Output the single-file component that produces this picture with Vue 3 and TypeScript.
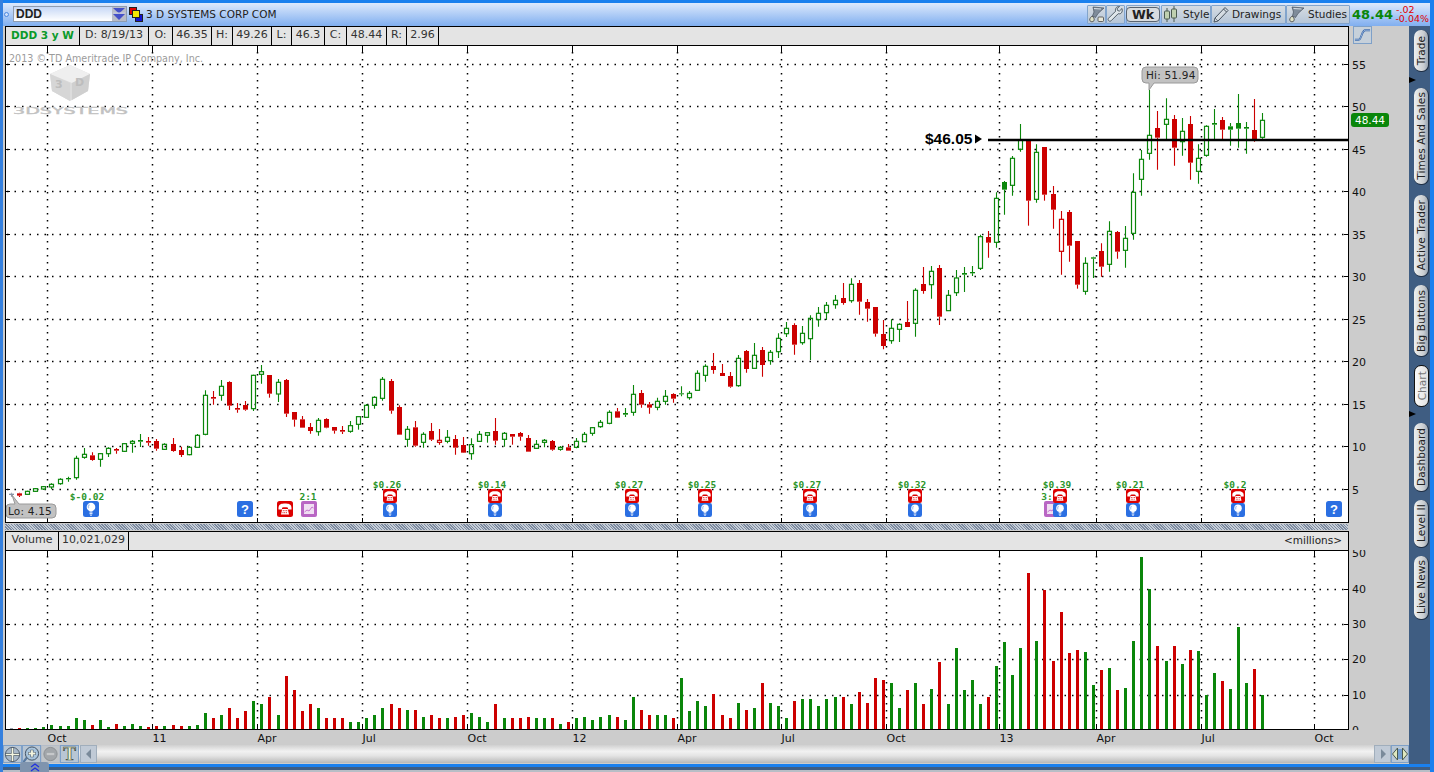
<script setup lang="ts">
type Candle = { x: number; kind: string; wt: number; bt: number; bb: number; wb: number; color: string; hollow: boolean };

function section(base: number, rows: string): number[][] {
  return rows.trim().split(/\s*;\s*/).filter(Boolean).map((r) => {
    const p = r.trim().split(/\s+/);
    return [p[0].charCodeAt(0), base + +p[1] / 3, base + +p[2] / 3, base + +p[3] / 3, base + +p[4] / 3];
  });
}

const raw: number[][] = [
  ...section(360, `g 398 401 405 410; r 398 400 407 411; h 392 394 403 404; h 384 386 394 395; h 378 380 387 390; h 370 373 381 388;
  h 355 358 371 374; f 350 354 358 365; h 287 295 353 359; h 264 283 292 296; r 277 286 300 302; h 279 281 298 320;
  h 262 265 281 291; r 264 267 272 281; h 249 251 274 276; h 240 244 250 278; f 222 240 245 261; r 231 243 248 257;
  r 237 243 266 272; h 250 253 268 270; r 234 252 273 275; r 260 270 285 291; h 258 262 284 286; h 222 226 262 264;
  h 91 106 223 226; r 93 111 116 134; h 60 79 106 122; r 64 66 137 150; r 129 144 149 158; r 123 135 149 152;
  h 44 46 146 153; h 15 35 43 71; r 45 45 101 113; h 57 67 102 126; r 57 60 161 171; r 156 156 179 200; r 168 178 203 203;
  r 189 201 213 221; h 174 181 215 227; r 175 177 203 205; r 201 201 212 221; r 198 210 215 222;
  h 183 197 214 218; h 170 170 193 209; h 132 136 172 172; h 109 112 136 146; h 51 58 115 122; r 57 63 152 161; r 136 141 224 224;
  h 198 208 238 260; r 183 202 257 260; h 217 223 247 263; r 189 213 239 243; R 207 241 247 254; h 210 232 244 250;
  r 225 237 263 284; r 231 255 278 279; h 235 254 281 299; h 213 223 244 246; h 218 218 226 248; r 174 213 242 254;
  h 216 220 238 260; r 222 222 230 254; r 216 219 230 242; r 225 234 275 275; h 240 253 265 266; h 237 241 247 262;
  r 240 243 269 272; h 258 262 268 272; r 252 262 272 272; h 234 244 262 265; h 216 223 245 247; h 202 203 220 227;
  h 180 187 200 203; h 151 157 190 193; r 144 154 173 173; f 144 159 164 171; h 75 103 157 167; r 90 99 134 143;
  r 126 133 143 161; h 113 124 142 151; h 90 109 124 134; r 100 102 116 128;`),
  ...section(270, `f 349 370 373 379; h 363 370 383 389; h 301 310 361 361; h 283 289 316 335; r 249 288 300 311; r 282 309 318 318;
  r 306 318 350 353; h 255 265 347 350; r 240 243 297 308; h 219 256 295 295; r 231 240 285 320; h 240 247 272 284;
  h 190 205 245 264; h 156 175 191 201; r 160 165 224 254; h 168 190 218 224; h 136 145 206 270; h 111 130 149 170;
  h 96 106 128 150; h 75 91 104 116; r 39 84 99 104; h 25 43 92 98; r 30 39 95 134; r 87 96 116 155; r 111 111 191 200;
  r 150 192 228 238; h 148 175 212 221; h 160 163 178 216; r 93 156 171 171; h 55 61 160 200; r -9 42 63 71;
  h -12 4 44 86; r -15 -6 140 165; h 60 76 122 122; h 0 24 68 78; f -9 9 14 66; f -12 6 10 18;`),
  ...section(90, `h 434 440 535 540; r 423 441 458 503; h 307 325 457 473; f 273 276 299 374; h 198 205 286 317; h 102 150 178 185;
  r 150 150 332 407; h 163 187 328 338; r 171 171 314 332; r 288 312 359 416; R 363 388 484 554; r 360 366 467 515;
  r 453 453 584 596; h 502 520 604 614; f 500 502 506 564; r 460 483 530 560; h 394 424 523 545; r 423 426 485 506;
  h 408 445 481 533; h 250 307 430 449; h 180 208 268 317; h 0 136 190 209; r 63 114 143 239; h 25 88 103 150;
  r 75 87 173 227; h 84 124 155 197; r 78 102 218 269; h 163 205 244 281; h 106 109 196 200; f 57 99 104 150;
  r 81 90 119 150; f 99 109 119 167; f 12 99 116 173; f 96 111 116 191; r 27 120 148 155; h 69 91 142 146;`),
];

const candleColor: Record<string, string> = { g: '#8794a6', r: '#cc0000', R: '#cc0000', h: '#0a860a', f: '#0a860a' };

const candles: Candle[] = raw.map((r, i) => {
  const kind = String.fromCharCode(r[0]);
  return {
    x: Math.floor(11.6 + 8.073 * i) + 0.5,
    kind,
    wt: r[1],
    bt: r[2],
    bb: r[3],
    wb: r[4],
    color: candleColor[kind],
    hollow: kind === 'h' || kind === 'R',
  };
});

const heights = [
  1, 1.5, 1, 1, 2, 4, 3, 3, 11, 9, 4, 9, 2, 5, 3, 5, 3, 2, 3, 3, 4, 3, 3, 4,
  16, 11, 14, 21, 11, 18, 28, 25, 32, 14, 53, 39, 18, 25, 21, 11, 11, 11, 7, 7, 11, 14, 21, 25, 21, 19, 19, 12, 14, 11, 11,
  12, 14, 16, 12, 7, 25, 11, 11, 11, 12, 11, 11, 11, 5, 7, 11, 12, 9, 12, 14, 12, 9, 32, 19, 14, 14, 14, 11, 51, 18, 28, 23,
  35, 14, 11, 26, 19, 21, 46, 26, 23, 11, 28, 30, 30, 23, 30, 32, 32, 25, 37, 26, 51, 49, 46, 21, 39, 46, 25, 40, 67, 25, 81,
  39, 49, 25, 32, 63,
  87, 54, 81, 156, 88, 139, 68, 117, 76, 79, 77, 44, 59, 61, 39, 41, 88, 172, 140, 83, 68, 83, 65, 79, 78, 34, 56, 48, 40, 102, 46, 60, 34,
];

const bars = candles.map((c, i) => ({
  x: c.x - 1.5,
  y: 729 - heights[i],
  h: heights[i],
  color: c.color === '#cc0000' ? '#cc0000' : c.kind === 'g' ? '#9aa3ae' : '#0a860a',
}));

const gridX = [47.5, 152.5, 257.5, 362.5, 467.5, 572.5, 677.5, 781.5, 886.5, 999.5, 1096.5, 1201.5, 1314.5];
const gridY = [64.5, 106.5, 149.5, 191.5, 234.5, 276.5, 319.5, 361.5, 404.5, 446.5, 489.5];
const volY = [589.5, 624.5, 659.5, 695.5];
const priceLabels = [55, 50, 45, 40, 35, 30, 25, 20, 15, 10, 5];
const volLabels: [string, number][] = [['50', 553], ['40', 589], ['30', 624], ['20', 659], ['10', 695], ['0', 730]];
const xLabels = ['Oct', '11', 'Apr', 'Jul', 'Oct', '12', 'Apr', 'Jul', 'Oct', '13', 'Apr', 'Jul', 'Oct'];

const earnings = [
  { x: 390, label: '$0.26' }, { x: 495, label: '$0.14' }, { x: 632, label: '$0.27' },
  { x: 705, label: '$0.25' }, { x: 810, label: '$0.27' }, { x: 915, label: '$0.32' },
  { x: 1060, label: '$0.39' }, { x: 1133, label: '$0.21' }, { x: 1238, label: '$0.2' },
];

const cells = [
  { t: 'DDD 3 y W', w: 74, cls: 'sym' }, { t: 'D: 8/19/13', w: 69, cls: '' }, { t: 'O:', w: 24, cls: '' }, { t: '46.35', w: 39, cls: '' },
  { t: 'H:', w: 21, cls: '' }, { t: '49.26', w: 39, cls: '' }, { t: 'L:', w: 20, cls: '' }, { t: '46.3', w: 33, cls: '' },
  { t: 'C:', w: 22, cls: '' }, { t: '48.44', w: 40, cls: '' }, { t: 'R:', w: 20, cls: '' }, { t: '2.96', w: 32, cls: '' },
];

const tabs = [
  { t: 'Trade', h: 42, top: 4, active: false },
  { t: 'Times And Sales', h: 97, top: 16, active: false },
  { t: 'Active Trader', h: 82, top: 10, active: false },
  { t: 'Big Buttons', h: 72, top: 8, active: false },
  { t: 'Chart', h: 42, top: 8, active: true },
  { t: 'Dashboard', h: 69, top: 16, active: false },
  { t: 'Level II', h: 48, top: 8, active: false },
  { t: 'Live News', h: 64, top: 8, active: false },
];
</script>

<template>
  <div class="app">
    <header class="top">
      <span class="dot"></span>
      <div class="symbol">
        <span class="symbol-text">DDD</span>
        <span class="drop">
          <svg width="14" height="14" viewBox="0 0 14 14">
            <path d="M1 1h12L7 6.500z" fill="#4450c8" />
            <path d="M1 7h12L7 13z" fill="#4450c8" />
            <path d="M1 6h12" stroke="#c8cce8" />
          </svg>
        </span>
      </div>
      <svg class="link" width="14" height="15" viewBox="0 0 14 15">
        <rect x="0.500" y="0.500" width="7" height="7" fill="#e00000" stroke="#222" />
        <rect x="6.500" y="7.500" width="7" height="7" fill="#1414d0" stroke="#222" />
        <rect x="3.500" y="3.500" width="7" height="7" fill="#f4e800" stroke="#222" />
      </svg>
      <span class="company">3 D SYSTEMS CORP COM</span>
      <div class="spacer"></div>
      <div class="tools">
        <button class="tool sq">
          <svg width="17" height="17" viewBox="0 0 17 17">
            <path d="M5 1l11 1-6 5.500-2.500 4-3-1.500L6 6z" fill="#7f8c9a" stroke="#48525e" stroke-width=".7" />
            <path d="M6 2.500l7 .5" stroke="#d8dee4" />
            <path d="M4 10c1.500 1.500 2.500 2.500 2.200 4a2.300 2.300 0 0 1-4.500 0C1.500 12.500 3 11 4 10z" fill="#dfe3c8" stroke="#444" stroke-width=".8" />
            <rect x="10" y="11" width="5.500" height="4.500" rx="1" fill="#e8e8d8" stroke="#444" stroke-width=".8" />
          </svg>
        </button>
        <button class="tool sq">
          <svg width="17" height="17" viewBox="0 0 17 17">
            <path d="M15 2.500l-2.600 2.600-1.800-.6-.6-1.800L12.600 0.400C9.800 0 7.800 2.500 8.600 5.200L1.600 12.200c-1.500 1.700.8 4 2.600 2.500l7-7c2.700.8 4.800-1.500 3.800-5.200z" fill="#dfe6ea" stroke="#46525e" stroke-width=".9" />
          </svg>
        </button>
        <button class="tool wk"><span class="wk-pill">Wk</span></button>
        <button class="tool style">
          <svg width="16" height="17" viewBox="0 0 16 17">
            <path d="M4 2v14M11 0v16" stroke="#4a5a50" />
            <rect x="1.500" y="5" width="5" height="8" rx="1" fill="#bfd0b0" stroke="#4a5a50" />
            <rect x="8.500" y="3" width="5" height="9" rx="1" fill="#bfd0b0" stroke="#4a5a50" />
          </svg>
          <span>Style</span>
        </button>
        <button class="tool draw">
          <svg width="16" height="17" viewBox="0 0 16 17">
            <path d="M12 1.500l3 3L5 15l-4 1 1-4z" fill="#d5dce2" stroke="#46525e" />
            <path d="M10.500 3l3 3" stroke="#46525e" />
            <path d="M2 12l3 3" stroke="#46525e" stroke-width=".7" />
          </svg>
          <span>Drawings</span>
        </button>
        <button class="tool studies">
          <svg width="17" height="17" viewBox="0 0 17 17">
            <path d="M4 1l12 1-6 5.500-2.500 4-3-1.500L5.500 6z" fill="#7f8c9a" stroke="#48525e" stroke-width=".7" />
            <path d="M5.500 2.500l8 .5" stroke="#d8dee4" />
            <path d="M4 10c1.500 1.500 2.500 2.500 2.200 4a2.300 2.300 0 0 1-4.500 0C1.500 12.500 3 11 4 10z" fill="#dfe3c8" stroke="#444" stroke-width=".8" />
          </svg>
          <span>Studies</span>
        </button>
      </div>
      <span class="last">48.44</span>
      <div class="chg"><span>-.02</span><span>-0.04%</span></div>
    </header>

    <div class="mid">
      <main class="main">
        <section class="pane upper">
          <div class="bar">
            <span v-for="c in cells" :key="c.t" class="cell" :class="c.cls" :style="{ width: c.w + 'px' }">{{ c.t }}</span>
          </div>
          <svg class="plot" viewBox="6 46 1342 476" width="1342" height="476">
            <defs>
              <symbol id="bulb" viewBox="0 0 16 16">
                <rect width="16" height="16" rx="2.500" fill="#2b6fe2" />
                <circle cx="8" cy="6" r="4.300" fill="#fff" />
                <path d="M6.500 3.500a3 3 0 0 0-.8 3.800" stroke="#a8c4f2" stroke-width="1.200" fill="none" />
                <path d="M6.500 11h3M6.500 12.700h3M7.200 14.200h1.600" stroke="#fff" stroke-width="1" />
              </symbol>
              <symbol id="phone" viewBox="0 0 16 16">
                <rect width="16" height="16" rx="2.500" fill="#dc0000" />
                <path d="M1.500 7C1.500 3 5 2.500 8 2.500s6.500.5 6.500 4.500v1.500H11V6.800c-1.800-.6-4.200-.6-6 0v1.700H1.500z" fill="#fff" />
                <path d="M4 13.500l1.200-5.500h5.600l1.200 5.500z" fill="#fff" />
                <path d="M5.800 9.700h4.400M5.500 11.700h5" stroke="#dc0000" stroke-width=".9" stroke-dasharray="1 .7" />
              </symbol>
              <symbol id="split" viewBox="0 0 16 16">
                <rect width="16" height="16" rx="2" fill="#b966c4" />
                <rect x="3" y="3" width="10" height="10" fill="#f0dff2" />
                <path d="M3.500 11l2.500-2 2 1 3-4 1.500 1" stroke="#c774d0" fill="none" />
              </symbol>
              <symbol id="ques" viewBox="0 0 16 16">
                <rect width="16" height="16" rx="2.500" fill="#2b6fe2" />
              </symbol>
            </defs>

            <g class="grid">
              <line v-for="y in gridY" :key="'h' + y" x1="7" :y1="y" x2="1344" :y2="y" />
              <line v-for="x in gridX" :key="'v' + x" :x1="x" y1="52" :x2="x" y2="518" class="vert" />
            </g>
            <g class="ticks">
              <path v-for="x in gridX" :key="'t' + x" :d="`M${x} 46v6M${x} 518v5`" />
              <path v-for="y in gridY" :key="'l' + y" :d="`M5 ${y}h5M1344 ${y}h4`" />
            </g>

            <text class="wm" x="9" y="62">2013 © TD Ameritrade IP Company, Inc.</text>
            <g class="logo">
              <path d="M70 65l20 9-2 17-18 10-18-10-2-17z" fill="#dcdcdc" />
              <path d="M70 65l20 9-18 9-22-9z" fill="#efefef" />
              <path d="M50 74l20 9v18l-18-10z" fill="#d6d6d6" />
              <path d="M72 83l18-9-2 17-16 9z" fill="#cfcfcf" />
              <text x="55" y="88" class="logo-d" transform="skewY(14 55 88)">3</text>
              <text x="75" y="86" class="logo-d" transform="skewY(-14 75 86)">D</text>
              <text x="13" y="114" class="logo-t" textLength="115" lengthAdjust="spacingAndGlyphs">3DSYSTEMS</text>
            </g>

            <g v-for="(c, i) in candles" :key="i" :stroke="c.color">
              <path class="wick" :d="`M${c.x} ${c.wt}V${c.bt}M${c.x} ${c.bb}V${c.wb}`" />
              <rect v-if="c.hollow" class="hollow" :x="c.x - 2" :y="c.bt" width="4" :height="c.bb - c.bt" />
              <rect v-else class="solid" :x="c.x - 2.5" :y="c.bt" width="5" :height="Math.max(c.bb - c.bt, 1)" :fill="c.color" stroke="none" />
            </g>

            <line x1="988" y1="140" x2="1348" y2="140" class="level" />
            <text class="lvl-text" x="925" y="144">$46.05</text>
            <path d="M975 134.500l7 4.500-7 4.500z" fill="#000" />

            <path class="bubble" d="M1146 67h48a4 4 0 0 1 4 4v8a4 4 0 0 1-4 4h-40l-5 7 0-7h-3a4 4 0 0 1-4-4v-8a4 4 0 0 1 4-4z" />
            <text class="bub-text" x="1146" y="79">Hi: 51.94</text>
            <path class="bubble" d="M12 495l7 9h33a4 4 0 0 1 4 4v6a4 4 0 0 1-4 4H10a4 4 0 0 1-4-4v-6a4 4 0 0 1 4-4h5z" />
            <text class="bub-text" x="8" y="515">Lo: 4.15</text>

            <text class="ev" x="87" y="499.500">$-0.02</text>
            <use href="#bulb" x="83" y="501" width="16" height="16" />
            <use href="#ques" x="237" y="501" width="16" height="16" />
            <text class="q" x="245" y="514">?</text>
            <use href="#phone" x="277" y="501" width="16" height="16" />
            <text class="ev" x="308" y="499.500">2:1</text>
            <use href="#split" x="301" y="501" width="16" height="16" />

            <text class="ev" x="1047" y="499.500">3:</text>
            <use href="#split" x="1044" y="501" width="16" height="16" />
            <g v-for="e in earnings" :key="e.x">
              <text class="ev" :x="e.x - 3" y="487.500">{{ e.label }}</text>
              <use href="#phone" :x="e.x - 7" y="489" width="14" height="14" />
              <use href="#bulb" :x="e.x - 7" y="503" width="14" height="14" />
            </g>
            <use href="#ques" x="1326" y="501" width="16" height="16" />
            <text class="q" x="1334" y="514">?</text>
          </svg>
        </section>

        <aside class="axis upper-axis">
          <div class="axis-top">
            <button class="study-btn">
              <svg width="18" height="16" viewBox="0 0 18 16">
                <path d="M1 13h4c3 0 3-10 7-10h5" fill="none" stroke="#2c5fa8" stroke-width="2" />
                <path d="M1 13h4c3 0 3-10 7-10h5" fill="none" stroke="#dfe8f2" stroke-width=".6" />
              </svg>
            </button>
          </div>
          <svg class="axis-svg" viewBox="1349 45 60 478" width="60" height="478">
            <text v-for="(p, i) in priceLabels" :key="p" class="ax" x="1352" :y="gridY[i] + 4">{{ p }}</text>
            <rect x="1351" y="113" width="38" height="14" rx="3" fill="#0a860a" />
            <text class="tag" x="1370" y="124">48.44</text>
          </svg>
        </aside>

        <div class="splitter"></div>

        <section class="pane lower">
          <div class="bar vol-bar">
            <span class="cell vol1">Volume</span>
            <span class="cell vol2">10,021,029</span>
            <span class="millions">&lt;millions&gt;</span>
          </div>
          <svg class="plot" viewBox="6 551 1342 178" width="1342" height="178">
            <g class="grid">
              <line v-for="y in volY" :key="'vh' + y" x1="7" :y1="y" x2="1344" :y2="y" />
              <line v-for="x in gridX" :key="'vv' + x" :x1="x" y1="556" :x2="x" y2="724" class="vert" />
            </g>
            <g class="ticks">
              <path v-for="x in gridX" :key="'vt' + x" :d="`M${x} 550v6M${x} 724v5`" />
              <path v-for="y in volY" :key="'vl' + y" :d="`M5 ${y}h5M1344 ${y}h4`" />
            </g>
            <rect v-for="(b, i) in bars" :key="i" :x="b.x" :y="b.y" width="3" :height="b.h" :fill="b.color" shape-rendering="crispEdges" />
          </svg>
        </section>

        <aside class="axis lower-axis">
          <svg class="vol-axis" viewBox="1349 550 60 180" width="60" height="180">
            <text v-for="l in volLabels" :key="l[0]" class="ax" x="1352" :y="l[1] + 4">{{ l[0] }}</text>
          </svg>
        </aside>

        <svg class="xaxis" viewBox="5 730 1344 15" width="1344" height="15">
          <text v-for="(l, i) in xLabels" :key="i" class="xl" :x="gridX[i]" y="742">{{ l }}</text>
        </svg>

        <div class="toolbar">
          <button class="tb">
            <svg width="18" height="17" viewBox="0 0 18 17">
              <circle cx="9" cy="8.500" r="7.500" fill="#a8b8c8" stroke="#4a5868" />
              <path d="M9 1v15M1.500 8.500h15" stroke="#4a5868" stroke-width="3" />
              <path d="M9 1.500v14M2 8.500h14" stroke="#f4f6e0" stroke-width="1.800" />
            </svg>
          </button>
          <button class="tb">
            <svg width="18" height="17" viewBox="0 0 18 17">
              <path d="M4 12l-4 5" stroke="#5a7aa0" stroke-width="2.400" />
              <circle cx="9.500" cy="7.500" r="7" fill="#a8c4dc" stroke="#3e4e60" />
              <path d="M9.500 3.500v8M5.500 7.500h8" stroke="#4a5868" stroke-width="3.200" />
              <path d="M9.500 4v7M6 7.500h7" stroke="#f4f6e0" stroke-width="2" />
            </svg>
          </button>
          <button class="tb off">
            <svg width="18" height="17" viewBox="0 0 18 17">
              <circle cx="9" cy="8" r="7" fill="#a2a6aa" stroke="#8a8e92" />
              <path d="M5 8h8" stroke="#c6c8ca" stroke-width="2.400" />
            </svg>
          </button>
          <button class="tb"><span class="t-ic">T</span></button>
          <button class="arrow">
            <svg width="8" height="12" viewBox="0 0 8 12"><path d="M6 1v10L1 6z" fill="#7a8a9a" /></svg>
          </button>
          <div class="spacer"></div>
          <button class="arrow">
            <svg width="8" height="12" viewBox="0 0 8 12"><path d="M2 1v10l5-5z" fill="#7a8a9a" /></svg>
          </button>
          <button class="tb last-tb">
            <svg width="16" height="14" viewBox="0 0 16 14">
              <path d="M5.500 1L0.500 7l5 6z" fill="#dfe8c0" stroke="#4a5a50" />
              <path d="M10.500 1l5 6-5 6z" fill="#dfe8c0" stroke="#4a5a50" />
              <path d="M7 2v10M9 2v10" stroke="#5a90d0" stroke-width="1.500" />
            </svg>
          </button>
        </div>
      </main>

      <nav class="side">
        <span class="tri one"></span>
        <span class="tri two"></span>
        <span
          v-for="t in tabs"
          :key="t.t"
          class="tab"
          :class="{ on: t.active }"
          :style="{ height: t.h + 'px', marginTop: t.top + 'px' }"
        ><span class="tab-text">{{ t.t }}</span></span>
      </nav>
    </div>

    <footer class="foot">
      <span class="pull">
        <svg width="10" height="9" viewBox="0 0 10 9">
          <path d="M1 4l4-3 4 3M1 8l4-3 4 3" fill="none" stroke="#2030e0" stroke-width="1.200" />
        </svg>
      </span>
    </footer>
  </div>
</template>

<style scoped>
.app {
  position: relative;
  width: 1434px;
  height: 772px;
  box-sizing: border-box;
  display: flex;
  flex-direction: column;
  overflow: hidden;
  background: #cccccc;
  border-left: 3px solid #3580de;
  border-right: 4px solid #1a80ee;
  font-family: "DejaVu Sans", "Liberation Sans", sans-serif;
  color: #222;
}
.top {
  height: 26px;
  box-sizing: border-box;
  display: flex;
  align-items: center;
  padding: 3px 0 4px 0;
  border-top: 3px solid #1a80ee;
  background: linear-gradient(#dde9fc, #80aff0);
  font-size: 11px;
}
.dot {
  width: 3px;
  height: 3px;
  border: 1px solid #4a88e0;
  border-radius: 50%;
  margin-right: 4px;
  margin-left: 1px;
  background: #cfe0fa;
}
.symbol {
  width: 114px;
  height: 16px;
  box-sizing: border-box;
  display: flex;
  align-items: center;
  justify-content: space-between;
  border: 1px solid #8e9cb0;
  background: linear-gradient(#c7d8f6, #fff);
  margin-right: 2px;
}
.symbol-text {
  font: bold 12px "Liberation Sans", sans-serif;
  padding-left: 2px;
  color: #222;
}
.drop {
  width: 14px;
  height: 14px;
  background: #b8bcc8;
  display: flex;
}
.link { margin-right: 3px; }
.company {
  font-size: 10.500px;
  color: #222;
  white-space: nowrap;
}
.spacer { flex: 1; }
.tools {
  display: flex;
  height: 19px;
  margin-right: 1px;
}
.tool {
  box-sizing: border-box;
  height: 19px;
  padding: 0 0 0 1px;
  margin: 0;
  border: 1px solid #82a4cc;
  background: linear-gradient(#d6dce2, #b6c6d8);
  display: flex;
  align-items: center;
  font: 10.500px "DejaVu Sans", sans-serif;
  color: #222;
  border-radius: 1px;
}
.sq { width: 19px; justify-content: center; padding: 0; }
.wk { width: 34px; justify-content: center; margin-left: 1px; margin-right: 1px; padding: 0; }
.wk-pill {
  font-weight: bold;
  font-size: 12.500px;
  border: 1px solid #5a6470;
  border-radius: 4px;
  padding: 0 5px;
  line-height: 13px;
  background: #d8dcdf;
}
.style { width: 50px; gap: 4px; }
.draw { width: 75px; gap: 3px; }
.studies { width: 64px; gap: 3px; }
.last {
  color: #0a860a;
  font-weight: bold;
  font-size: 13px;
  width: 45px;
  padding-left: 1px;
  box-sizing: border-box;
}
.chg {
  width: 33px;
  display: flex;
  flex-direction: column;
  align-items: flex-end;
  color: #e00000;
  font-size: 9.500px;
  line-height: 9.500px;
  font-family: "DejaVu Sans", sans-serif;
  margin-right: 1px;
}
.chg span:first-child { align-self: flex-start; }

.mid {
  flex: 1;
  min-height: 0;
  display: flex;
}
.main {
  width: 1406px;
  display: grid;
  grid-template-columns: 1344px 60px;
  grid-template-rows: 497px 8px 199px 15px 18px;
  padding-left: 2px;
  box-sizing: border-box;
}
.pane {
  display: flex;
  flex-direction: column;
  border: 1px solid #000;
  box-sizing: border-box;
  width: 1344px;
  background: #fff;
  overflow: hidden;
}
.bar {
  flex: none;
  display: flex;
  height: 19px;
  box-sizing: border-box;
  background: #e4e4e4;
  border-bottom: 1px solid #000;
  font-size: 11px;
}
.cell {
  box-sizing: border-box;
  border-right: 1px solid #000;
  text-align: center;
  line-height: 16px;
  white-space: nowrap;
  color: #333;
  flex: none;
}
.sym {
  color: #0a9a2a;
  font-weight: bold;
  font-size: 10.500px;
}
.plot { display: block; flex: none; }
.upper { grid-column: 1; grid-row: 1; }
.lower { grid-column: 1; grid-row: 3; }
.splitter {
  grid-column: 1 / -1;
  grid-row: 2;
  margin: 1px 0;
  width: 1343px;
  background-color: #9aa6b6;
  background-image: repeating-linear-gradient(45deg, #7d8ba0 0 1px, #c6ced8 1px 2px);
}
.axis { width: 60px; }
.upper-axis { grid-column: 2; grid-row: 1; position: relative; }
.lower-axis { grid-column: 2; grid-row: 3; padding-top: 19px; }
.axis-top { height: 19px; padding-left: 4px; }
.study-btn {
  width: 19px;
  height: 18px;
  box-sizing: border-box;
  padding: 0;
  border: 1px solid #7ea0c8;
  background: #c6d0da;
  display: flex;
  align-items: center;
  justify-content: center;
}
.axis-svg, .vol-axis { display: block; }
.xaxis { grid-column: 1 / -1; grid-row: 4; display: block; }
.toolbar {
  grid-column: 1 / -1;
  grid-row: 5;
  display: flex;
  height: 18px;
  margin-left: -2px;
  background: linear-gradient(#d0d0d0, #f2f2f2 35%, #e4e4e4 60%, #b8b8b8);
}
.tb {
  box-sizing: border-box;
  width: 19px;
  height: 18px;
  padding: 0;
  border: 1px solid #7ea0c8;
  background: #b8c6d4;
  display: flex;
  align-items: center;
  justify-content: center;
}
.tb.off { border-color: #b4bcc8; background: #c0c4c8; }
.t-ic {
  font: bold 19px "Liberation Serif", serif;
  color: #eef0cc;
  -webkit-text-stroke: 0.7px #3c4a40;
  line-height: 16px;
}
.arrow {
  box-sizing: border-box;
  width: 17px;
  height: 18px;
  padding: 0;
  margin-left: 1px;
  border: 1px solid #a0aebc;
  background: #c0cad6;
  display: flex;
  align-items: center;
  justify-content: center;
}
.last-tb { width: 18px; }

.grid line {
  stroke: #000;
  stroke-width: 1.500;
  stroke-dasharray: 1.500 6;
  fill: none;
}
.grid .vert { stroke-dasharray: 1.500 5.500; }
.ticks path { stroke: #000; stroke-width: 1; fill: none; }
.wick { stroke-width: 1.100; fill: none; }
.hollow { fill: none; stroke-width: 1.200; }
.level { stroke: #000; stroke-width: 2.600; }
.lvl-text {
  font: bold 15.500px "Liberation Sans", sans-serif;
  fill: #000;
}
.wm { font-size: 9.600px; fill: #9c9c9c; }
.logo-d { font: bold 11px "DejaVu Sans", sans-serif; fill: #bdbdbd; }
.logo-t { font: 9px "DejaVu Sans", sans-serif; fill: #c0c0c0; stroke: #c4c4c4; stroke-width: .4; }
.bubble { fill: #c2c2c2; stroke: #9a9a9a; stroke-width: 1; }
.bub-text { font-size: 10.500px; fill: #222; letter-spacing: .2px; }
.ev {
  font: bold 9.500px "DejaVu Sans Mono", monospace;
  fill: #2c962c;
  text-anchor: middle;
}
.q {
  font: bold 13px "Liberation Sans", sans-serif;
  fill: #fff;
  text-anchor: middle;
}
.ax { font-size: 11px; fill: #111; }
.tag { font-size: 10.500px; fill: #fff; text-anchor: middle; }
.xl { font-size: 11px; fill: #111; }

.vol-bar { position: relative; }
.vol1 { width: 53px; }
.vol2 { width: 70px; }
.millions {
  margin-left: auto;
  margin-right: 6px;
  font-size: 10.500px;
  line-height: 16px;
  color: #222;
}

.side {
  position: relative;
  width: 21px;
  background: #3f5d82;
  display: flex;
  flex-direction: column;
  padding-left: 5px;
  box-sizing: border-box;
}
.tab {
  width: 15px;
  box-sizing: border-box;
  flex: none;
  display: flex;
  align-items: center;
  justify-content: center;
  border-radius: 7px;
  background: linear-gradient(90deg, #eef0f0, #c8ccd0 70%, #9aa4b0);
  border-right: 1px solid #1e2e44;
  border-bottom: 1px solid #1e2e44;
  overflow: hidden;
}
.tab.on {
  background: linear-gradient(90deg, #fafafa, #e0e0e0);
  border: 1px solid #111;
}
.tab.on .tab-text { color: #777; }
.tab-text {
  writing-mode: vertical-rl;
  transform: rotate(180deg);
  font-size: 10.500px;
  white-space: nowrap;
  color: #222;
  letter-spacing: .1px;
}
.tri {
  position: absolute;
  left: 0;
  width: 0;
  height: 0;
  border-left: 7px solid #000;
  border-top: 3.500px solid transparent;
  border-bottom: 3.500px solid transparent;
}
.tri.one { top: 51px; }
.tri.two { top: 385px; }

.foot {
  height: 8px;
  flex: none;
  box-sizing: border-box;
  border-top: 3px solid #1a80ee;
  background: #3f5d82;
  border-bottom: 2px solid #b8bec6;
}
.pull {
  position: absolute;
  left: 17px;
  top: 762px;
  width: 29px;
  height: 10px;
  background: #7f94ae;
  border-radius: 3px 3px 0 0;
  display: flex;
  align-items: center;
  justify-content: center;
}
</style>
